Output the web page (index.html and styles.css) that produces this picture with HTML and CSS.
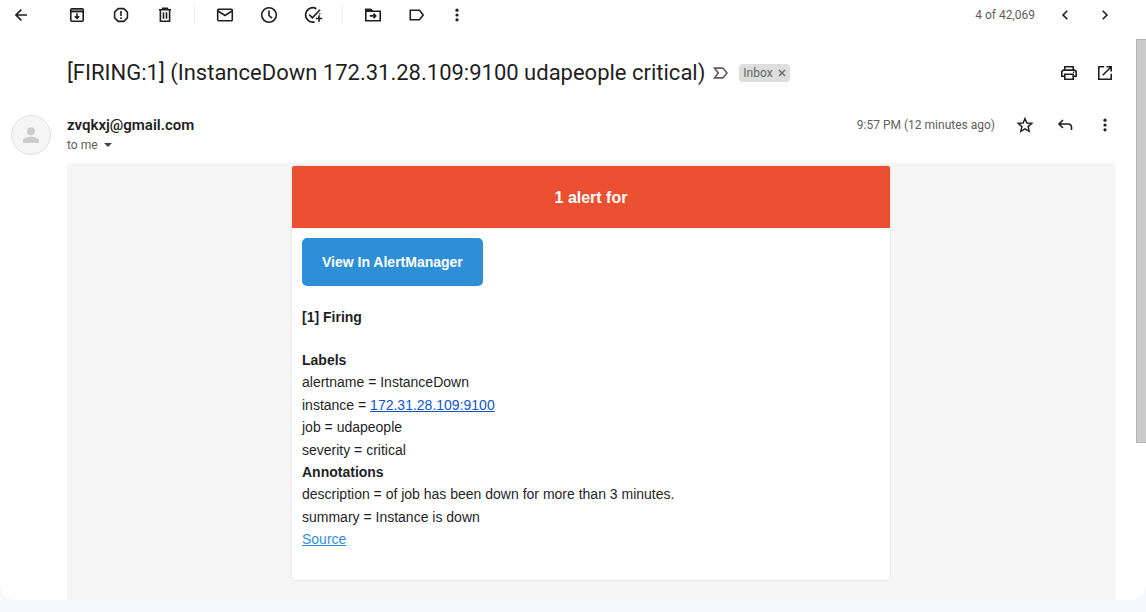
FILE: index.html
```html
<!DOCTYPE html>
<html lang="en">
<head>
<meta charset="utf-8">
<meta name="viewport" content="width=device-width, initial-scale=1">
<title>[FIRING:1] (InstanceDown) - Mail</title>
<link rel="stylesheet" href="styles.css">
</head>
<body>
<main class="panel">
  <header class="toolbar">
    <button class="tool tool-back" aria-label="Back"><svg class="icon" viewBox="0 0 20 20"><path d="M16 10H5M10.3 4.6 4.9 10l5.4 5.4"/></svg></button>
    <div class="tool-group">
      <button class="tool" aria-label="Archive"><svg class="icon" viewBox="0 0 20 20"><path class="lid" d="M4 4h12v2.5H4z"/><rect x="3.8" y="3.8" width="12.4" height="12.4" rx="1"/><path d="M4 6.6h12"/><path d="M10 8.2v5M7.8 11.2l2.2 2.2 2.2-2.2"/></svg></button>
      <button class="tool" aria-label="Report spam"><svg class="icon" viewBox="0 0 20 20"><path d="M7.2 3.6h5.6l3.6 3.6v5.6l-3.6 3.6H7.2l-3.6-3.6V7.2z"/><path d="M10 6v5M10 12.3v1.6"/></svg></button>
      <button class="tool" aria-label="Delete"><svg class="icon" viewBox="0 0 20 20"><path d="M4 4.8h12M7.6 4V3.3h4.8V4M5.4 5v11.3h9.2V5M8.500 7.2v6.6M11.5 7.2v6.6"/></svg></button>
    </div>
    <div class="tool-group">
      <button class="tool" aria-label="Mark as unread"><svg class="icon" viewBox="0 0 20 20"><rect x="2.7" y="4.2" width="14.6" height="11.6" rx="1"/><path d="m3 6 7 4.5L17 6"/></svg></button>
      <button class="tool" aria-label="Snooze"><svg class="icon" viewBox="0 0 20 20"><circle cx="10" cy="10" r="7.3"/><path d="M10 5.5v5l3 2.7"/></svg></button>
      <button class="tool" aria-label="Add to tasks"><svg class="icon" viewBox="0 0 20 20"><path d="M13.4 3.7A7.2 7.2 0 1 0 11.6 16.900M16.600 8.200a7 7 0 0 1 .2 1.200M6.200 9.600l3.200 3.200 7.600-8M16 10.300v6.400M12.800 13.500h6.400"/></svg></button>
    </div>
    <div class="tool-group">
      <button class="tool" aria-label="Move to"><svg class="icon" viewBox="0 0 20 20"><path d="M2.8 15.7V4.6h5l1.600 1.600h7.800v9.500z"/><path d="M2.800 4.600h5l1.600 1.600H2.800z"/><path d="M6.800 10.900h5.800M10.500 8.600l2.300 2.300-2.300 2.300"/></svg></button>
      <button class="tool" aria-label="Labels"><svg class="icon" viewBox="0 0 20 20"><path d="M3.300 5.200h9.200L16.200 10l-3.700 4.800H3.300z"/></svg></button>
      <button class="tool tool-narrow" aria-label="More"><svg class="icon" viewBox="0 0 20 20"><g class="dots"><circle cx="10" cy="5.2" r="1.6"/><circle cx="10" cy="10" r="1.6"/><circle cx="10" cy="14.8" r="1.6"/></g></svg></button>
    </div>
    <div class="pager">
      <span class="count">4 of 42,069</span>
      <button class="tool tool-square" aria-label="Newer"><svg class="icon" viewBox="0 0 20 20"><path d="M12.3 5.700 8 10l4.300 4.300"/></svg></button>
      <button class="tool tool-square" aria-label="Older"><svg class="icon" viewBox="0 0 20 20"><path d="M7.700 5.700 12 10l-4.300 4.300"/></svg></button>
    </div>
  </header>

  <div class="scroll-area">
    <article class="thread">
      <div class="subject">
        <h1 class="subject-title">[FIRING:1] (InstanceDown 172.31.28.109:9100 udapeople critical)</h1>
        <svg class="icon icon-important" viewBox="0 0 20 20" role="img" aria-label="Important"><path d="M3.500 5.100h8.300L16 10l-4.200 4.900H3.500L7.300 10z"/></svg>
        <span class="chip">Inbox <button class="chip-close" aria-label="Remove label Inbox"><svg class="icon-close" viewBox="0 0 8 8"><path d="m1 1 6 6M7 1 1 7"/></svg></button></span>
        <div class="actions">
          <button class="tool tool-narrow" aria-label="Print all"><svg class="icon" viewBox="0 0 20 20"><path d="M5.800 6.600V3.700h8.400v2.900M5.800 13.200H2.800V8.600l1.400-1.500h11.600l1.400 1.500v4.600h-3M5.800 11.200h8.400v5.100H5.800z"/><path d="M14 9.200h1.200"/></svg></button>
          <button class="tool tool-narrow" aria-label="Open in new window"><svg class="icon" viewBox="0 0 20 20"><path d="M9.200 3.800H3.800v12.400h12.400v-5.400M11.500 3.800h4.700v4.700M16 4l-8.300 8.300"/></svg></button>
        </div>
      </div>

      <div class="sender">
        <div class="avatar"><svg class="avatar-icon" viewBox="0 0 24 24"><circle cx="12" cy="8.200" r="4"/><path d="M4 20v-2.500C4 14.800 9 13.700 12 13.700s8 1.100 8 3.800V20z"/></svg></div>
        <div class="sender-info">
          <div class="sender-line">
            <span class="sender-name">zvqkxj@gmail.com</span>
            <span class="time">9:57 PM (12 minutes ago)</span>
            <div class="actions">
              <button class="tool tool-square" aria-label="Star"><svg class="icon" viewBox="0 0 20 20"><path class="thin" d="m10 3.600 1.900 4.400 4.900.4-3.700 3.200 1.100 4.700L10 13.800l-4.200 2.500 1.100-4.700-3.700-3.200L8.100 8z"/></svg></button>
              <button class="tool tool-square" aria-label="Reply"><svg class="icon" viewBox="0 0 20 20"><path d="M8 5 4 9l4 4M4.200 9H13c2 0 3.500 1.300 3.500 3.500V15"/></svg></button>
              <button class="tool tool-square" aria-label="More message options"><svg class="icon" viewBox="0 0 20 20"><g class="dots"><circle cx="10" cy="5.200" r="1.600"/><circle cx="10" cy="10" r="1.600"/><circle cx="10" cy="14.800" r="1.600"/></g></svg></button>
            </div>
          </div>
          <button class="recipient">to me <span class="caret"></span></button>
        </div>
      </div>

      <section class="message">
        <div class="card">
          <h2 class="card-head">1 alert for</h2>
          <div class="card-body">
            <a class="cta" href="#">View In AlertManager</a>
            <h3 class="firing">[1] Firing</h3>
            <div class="details">
              <strong>Labels</strong><br>
              alertname = InstanceDown<br>
              instance = <a class="link-ip" href="#">172.31.28.109:9100</a><br>
              job = udapeople<br>
              severity = critical<br>
              <strong>Annotations</strong><br>
              description = of job has been down for more than 3 minutes.<br>
              summary = Instance is down<br>
              <a class="link-source" href="#">Source</a>
            </div>
          </div>
        </div>
      </section>
    </article>
    <div class="scrollbar" aria-hidden="true"><div class="thumb"></div></div>
  </div>
</main>
</body>
</html>
```
FILE: styles.css
```css
* { box-sizing: border-box; }

body {
  margin: 0;
  padding-bottom: 12px;
  background: #f6f8fc;
  color: #1f1f1f;
  font-family: Roboto, "Liberation Sans", sans-serif;
  font-size: 12px;
}

button {
  padding: 0;
  border: 0;
  background: none;
  color: inherit;
  font: inherit;
  cursor: pointer;
}

.panel {
  overflow: hidden;
  border-radius: 0 0 16px 16px;
  background: #fff;
}

.icon {
  width: 20px;
  height: 20px;
  flex: none;
  fill: none;
  stroke: #1f1f1f;
  stroke-width: 1.6;
}
.icon .lid { fill: #999; stroke: none; }
.icon .thin { stroke-width: 1.4; }
.icon .dots { fill: #1f1f1f; stroke: none; }

/* Toolbar */
.toolbar {
  display: flex;
  align-items: center;
  height: 39px;
  padding: 0 21px 9px 1px;
}
.tool {
  display: flex;
  flex: none;
  align-items: center;
  justify-content: center;
  width: 44px;
  height: 20px;
}
.tool-back { width: 40px; margin-right: 14px; }
.tool-narrow { width: 36px; }
.tool-square { width: 40px; }
.tool-group { display: flex; }
.tool-group + .tool-group {
  margin-left: 7px;
  padding-left: 8px;
  border-left: 1px solid #eceff1;
}
.pager {
  display: flex;
  align-items: center;
  margin-left: auto;
  color: #5e5e5e;
}
.count { margin-right: 10px; }

/* Thread */
.scroll-area { display: flex; }
.thread { flex: 1; min-width: 0; }
.scrollbar { width: 10px; flex: none; }
.thumb {
  height: 72%;
  border: 1px solid #b4b4b4;
  border-right: 0;
  background: #cbcbcb;
}

.subject {
  display: flex;
  align-items: center;
  min-height: 28px;
  margin-top: 20px;
  padding: 0 13px 0 67px;
}
.subject-title {
  margin: 0;
  font-size: 22px;
  font-weight: 400;
  line-height: 28px;
}
.icon-important { margin: 0 8px 0 6px; stroke: #5e5e5e; }
.chip {
  display: flex;
  align-items: center;
  gap: 5px;
  height: 18px;
  padding: 0 4px;
  border-radius: 4px;
  background: #ddd;
  color: #666;
}
.chip-close { display: flex; }
.icon-close { width: 8px; height: 8px; fill: none; stroke: #666; stroke-width: 1.4; }
.actions { display: flex; }
.subject .actions { margin-left: auto; }

.sender {
  display: flex;
  gap: 16px;
  padding: 28px 11px 8px;
}
.avatar {
  display: flex;
  align-items: center;
  justify-content: center;
  width: 40px;
  height: 40px;
  flex: none;
  border: 1px solid #e0e0e0;
  border-radius: 50%;
  background: #f5f5f5;
}
.avatar-icon { width: 24px; height: 24px; fill: #ccc; }
.sender-info { flex: 1; min-width: 0; }
.sender-line { display: flex; align-items: center; height: 20px; }
.sender-name { font-size: 15px; font-weight: 600; }
.time { margin-left: auto; margin-right: 10px; color: #5e5e5e; }
.recipient {
  display: flex;
  align-items: center;
  gap: 6px;
  height: 20px;
  color: #5e5e5e;
}
.caret {
  border: 4px solid transparent;
  border-top-color: #444;
  border-bottom: 0;
}

/* Message */
.message {
  margin: 0 21px 0 67px;
  padding: 2px 0 19px;
  background: #f5f5f5;
  font: 14px/1.6 "Liberation Sans", Arial, sans-serif;
}
.card {
  max-width: 600px;
  margin: 0 auto;
  overflow: hidden;
  border: 1px solid #e9e9e9;
  border-radius: 3px;
  background: #fff;
}
.card-head {
  margin: 0;
  padding: 20px 20px 18px;
  background: #eb5033;
  color: #fff;
  font-size: 16px;
  line-height: 24px;
  text-align: center;
}
.card-body { padding: 10px 10px 29px; }
.cta {
  display: inline-block;
  padding: 12px 20px;
  border-radius: 5px;
  background: #2d8fd7;
  color: #fff;
  font-weight: 700;
  line-height: 24px;
  text-decoration: none;
  vertical-align: top;
}
.firing { margin: 20px 0 21px; font-size: 14px; line-height: 22px; }
.link-ip { color: #1155cc; }
.link-source { color: #348eda; }
```
